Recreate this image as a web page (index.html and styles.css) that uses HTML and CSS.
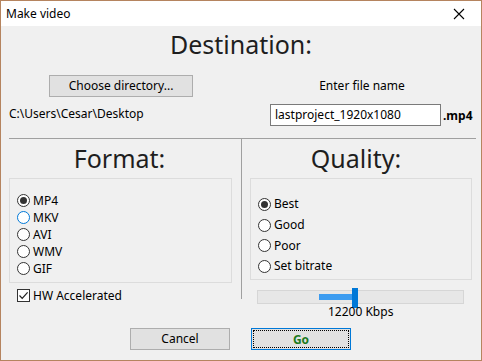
FILE: index.html
```html
<!doctype html>
<html lang="en">
<head>
	<meta charset="UTF-8">
	<title>Make video</title>
	<link rel="stylesheet" href="styles.css">
</head>
<body>
<div class="window">
	<div class="titlebar">
		<span class="title">Make video</span>
		<svg class="close" width="12" height="12" viewBox="0 0 12 12"><path d="M1 1L11 11M11 1L1 11" stroke="#000" stroke-width="1.1"/></svg>
	</div>
	<div class="dest_title">Destination:</div>
	<div class="dest">
		<div class="dest_left">
			<div class="btn btn_dir">Choose directory...</div>
			<div class="path">C:\Users\Cesar\Desktop</div>
		</div>
		<div class="dest_right">
			<div class="label">Enter file name</div>
			<div class="file_row">
				<div class="input">lastproject_1920x1080</div>
				<span class="ext">.mp4</span>
			</div>
		</div>
	</div>
	<div class="panes">
		<div class="pane pane_format">
			<div class="pane_title">Format:</div>
			<div class="box box_format">
				<div class="opt"><span class="radio on"></span>MP4</div>
				<div class="opt"><span class="radio hover"></span>MKV</div>
				<div class="opt"><span class="radio"></span>AVI</div>
				<div class="opt"><span class="radio"></span>WMV</div>
				<div class="opt"><span class="radio"></span>GIF</div>
			</div>
			<div class="opt hw"><span class="check"><svg width="11" height="11" viewBox="0 0 11 11"><path d="M1.5 5.5L4.2 8.3L9.6 2.3" fill="none" stroke="#222" stroke-width="1.2"/></svg></span>HW Accelerated</div>
		</div>
		<div class="pane pane_quality">
			<div class="pane_title">Quality:</div>
			<div class="box box_quality">
				<div class="opt"><span class="radio on"></span>Best</div>
				<div class="opt"><span class="radio"></span>Good</div>
				<div class="opt"><span class="radio"></span>Poor</div>
				<div class="opt"><span class="radio"></span>Set bitrate</div>
			</div>
			<div class="slider">
				<div class="track"><div class="fill"></div></div>
				<div class="thumb"></div>
			</div>
		</div>
	</div>
	<div class="kbps">12200 Kbps</div>
	<div class="footer">
		<div class="btn btn_foot">Cancel</div>
		<div class="btn btn_foot btn_go"><span class="focus">Go</span></div>
	</div>
</div>
</body>
</html>
```

FILE: styles.css
```css
*{box-sizing: border-box;}
body{margin: 0;font-family: "Noto Sans", "Open Sans", sans-serif;font-size: 12px;color: #000;}
.window{width: 482px;height: 361px;border: 1px solid #b5845f;background: #f0f0f0;overflow: hidden;}

.titlebar{height: 25px;background: #fff;display: flex;align-items: center;justify-content: space-between;padding: 0 16px 0 5px;}
.title{font-size: 12px;line-height: 16px;}
.close{display: block;}

.dest_title{margin-top: 3px;height: 30px;line-height: 30px;font-size: 25px;text-align: center;color: #1e1e1e;}
.dest{display: grid;grid-template-columns: 240px 240px;height: 79px;}
.dest_left{padding-left: 8px;}
.btn{background: #e1e1e1;border: 1px solid #adadad;text-align: center;height: 22px;line-height: 20px;}
.btn_dir{width: 144px;margin: 16px 0 0 40px;}
.path{margin-top: 9px;line-height: 16px;}
.dest_right{display: flex;flex-direction: column;}
.label{margin-top: 19px;line-height: 16px;text-align: center;padding-left: 2px;}
.file_row{margin-top: 10px;display: flex;align-items: center;padding-left: 29px;}
.input{width: 171px;height: 22px;line-height: 20px;background: #fff;border: 1px solid #7a7a7a;padding-left: 4px;}
.ext{font-weight: bold;margin-left: 2px;}

.panes{display: grid;grid-template-columns: 232px 235px;grid-template-rows: 161px;padding-left: 8px;}
.pane{border-top: 1px solid #a0a0a0;}
.pane_quality{border-left: 1px solid #a0a0a0;padding-left: 8px;}
.pane_title{margin-top: 4px;height: 30px;line-height: 30px;font-size: 25px;text-align: center;color: #1e1e1e;}
.pane_format .pane_title{padding-right: 11px;}
.pane_quality .pane_title{padding-right: 14px;}
.box{margin-top: 5px;border: 1px solid #dcdcdc;}
.box_format{width: 223px;height: 105px;padding-top: 13px;}
.box_quality{width: 222px;height: 102px;padding-top: 15px;}
.opt{display: flex;align-items: center;height: 17px;padding-left: 7px;line-height: 16px;}
.box_quality .opt{height: 20.7px;}
.radio{width: 13px;height: 13px;border: 1px solid #333;border-radius: 50%;background: #fff;margin-right: 3px;display: flex;align-items: center;justify-content: center;}
.radio.on::after{content: "";width: 7px;height: 7px;border-radius: 50%;background: #333;}
.radio.hover{border-color: #0078d7;}
.hw{margin-top: 4px;padding-left: 8px;}
.check{width: 13px;height: 13px;border: 1px solid #333;background: #fff;margin-right: 3px;display: flex;align-items: center;justify-content: center;}
.check svg{display: block;}

.slider{position: relative;margin: 8px 0 0 7px;width: 207px;height: 20px;}
.track{position: absolute;left: 0;top: 2px;width: 207px;height: 14px;background: #e7e7e7;border: 1px solid #d6d6d6;}
.fill{position: absolute;left: 61px;top: 3px;width: 35px;height: 6px;background: #3c9cf0;}
.thumb{position: absolute;left: 95px;top: 0;width: 6px;height: 20px;background: #0078d7;}
.kbps{margin-top: 5px;line-height: 16px;padding-left: 327px;position: relative;top: 0;}

.footer{display: flex;gap: 21px;padding-left: 129px;margin-top: 8px;}
.btn_foot{width: 100px;}
.btn_go{border-color: #0078d7;padding: 1px;line-height: 18px;}
.focus{display: block;height: 18px;border: 1px dotted #000;font-weight: bold;color: #1c7a1c;}
```
